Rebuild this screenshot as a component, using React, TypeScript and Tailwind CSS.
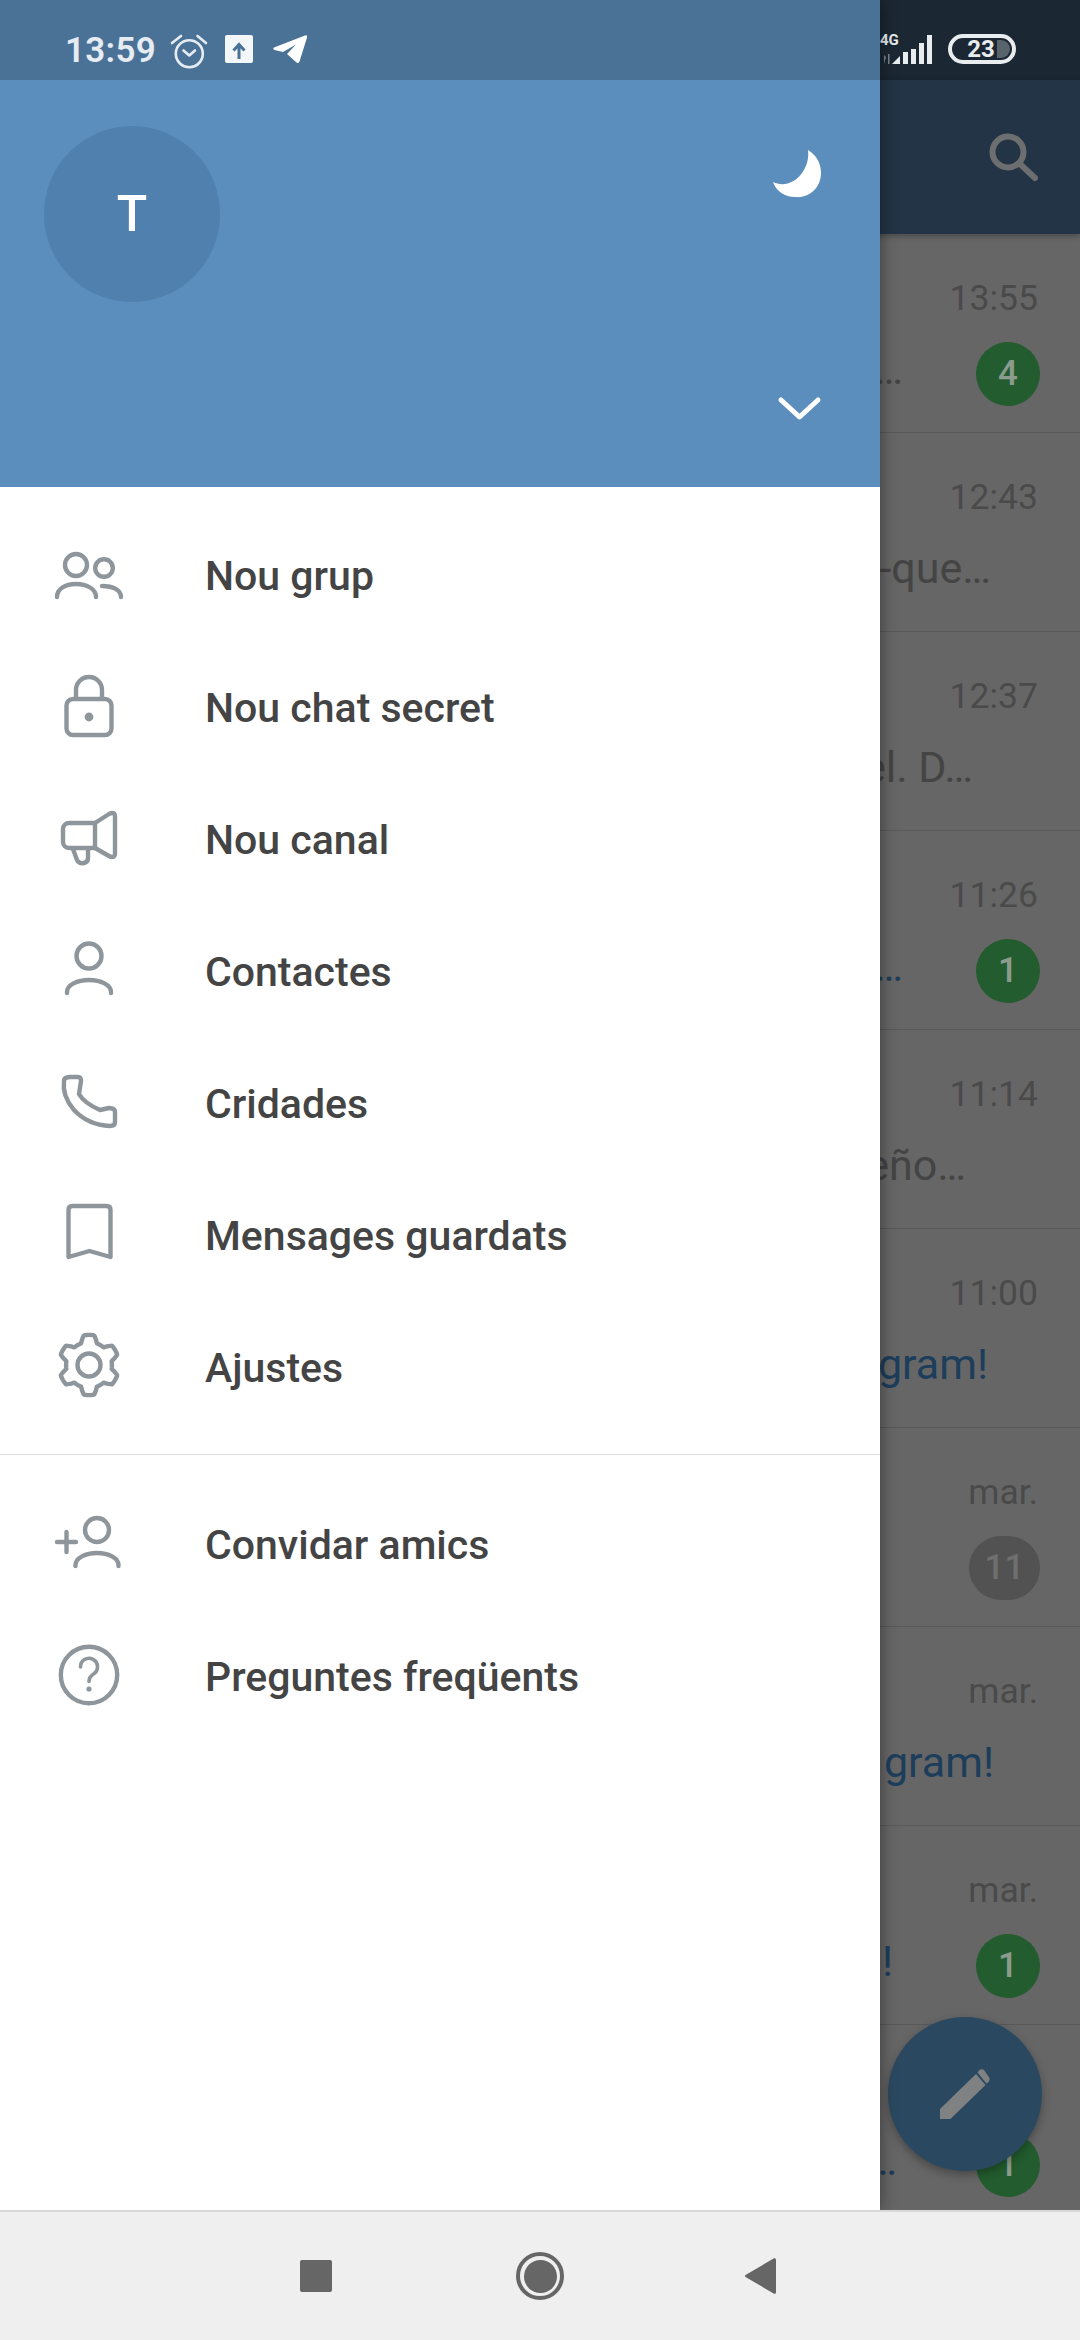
import React from "react";

const gearPath = (() => {
  const cx = 40, cy = 38, pts: string[] = [];
  for (let i = 0; i < 180; i++) {
    const t = (i / 180) * Math.PI * 2;
    const v = Math.max(-1, Math.min(1, Math.cos(6 * t) * 1.9));
    const r = 26.5 + 3.6 * v;
    pts.push(`${(cx + r * Math.sin(t)).toFixed(2)} ${(cy - r * Math.cos(t)).toFixed(2)}`);
  }
  return "M" + pts.join("L") + "Z";
})();

const Icon = ({ box, children }: { box: string; children: React.ReactNode }) => (
  <svg viewBox={box} className="w-[80px] h-[80px] shrink-0" fill="none" stroke="#8e969c" strokeWidth="4.4" strokeLinecap="round" strokeLinejoin="round">
    {children}
  </svg>
);

const menuA = [
  {
    label: "Nou grup",
    icon: (
      <Icon box="49 535 80 80">
        <circle cx="76" cy="565" r="11" />
        <circle cx="104" cy="568" r="8.8" />
        <path d="M57 597c0-8 8-13 19-13s20 5 20 13" />
        <path d="M102 586c11 0 19 4 19 11" />
      </Icon>
    ),
  },
  {
    label: "Nou chat secret",
    icon: (
      <Icon box="49 667 80 80">
        <rect x="66.5" y="699" width="45" height="36" rx="6.5" />
        <path d="M76 698v-8a13 13 0 0 1 26 0v8" />
        <circle cx="89" cy="717" r="4.4" fill="#8e969c" stroke="none" />
      </Icon>
    ),
  },
  {
    label: "Nou canal",
    icon: (
      <Icon box="49 800 80 80">
        <path d="M95 824H69a6 6 0 0 0-6 6v13a6 6 0 0 0 6 6h26z" />
        <path d="M95 824l14-9q6-3 6 3v36q0 6-6 3l-14-8" />
        <path d="M73 850l4 11q2 4 7 3q4-1 4-5v-9" />
      </Icon>
    ),
  },
  {
    label: "Contactes",
    icon: (
      <Icon box="49 933 80 80">
        <circle cx="89" cy="958" r="12.5" />
        <path d="M67 995v-1c0-7 10-12 22-12s22 5 22 12v1" />
      </Icon>
    ),
  },
  {
    label: "Cridades",
    icon: (
      <Icon box="49 1065 80 80">
        <path d="M70 1079h8q3 0 3 4l-2 13q5 9 21 16l9-2q6 0 6 4v10q0 4-5 4q-22-1-36-16q-12-14-10-29q0-4 6-4z" />
      </Icon>
    ),
  },
  {
    label: "Mensages guardats",
    icon: (
      <Icon box="49 1197 80 80">
        <path d="M68.5 1212q0-4 4-4h34q4 0 4 4v47l-21-6l-21 6z" />
      </Icon>
    ),
  },
  {
    label: "Ajustes",
    icon: (
      <Icon box="0 0 80 80">
        <path d={gearPath} />
        <circle cx="40" cy="38" r="11.5" />
      </Icon>
    ),
  },
];

const menuB = [
  {
    label: "Convidar amics",
    icon: (
      <Icon box="49 1505 80 80">
        <path d="M57 1543h19M66.5 1533v20" />
        <circle cx="97" cy="1531" r="12" />
        <path d="M75.5 1567v-1c0-7 10-12 21.5-12s21.5 5 21.5 12v1" />
      </Icon>
    ),
  },
  {
    label: "Preguntes freqüents",
    icon: (
      <Icon box="49 1637 80 80">
        <circle cx="89" cy="1676" r="28.2" />
        <path d="M80.5 1668a8.5 8.5 0 1 1 13 7c-3 2-4.5 4-4.5 7.5" strokeWidth="3.6" />
        <circle cx="89" cy="1690" r="2.6" fill="#8e969c" stroke="none" />
      </Icon>
    ),
  },
];

const MenuRow = ({ label, icon }: { label: string; icon: React.ReactNode }) => (
  <div className="flex items-center h-[132px] pl-[49px]">
    {icon}
    <span className="ml-[76px] mt-[3px] text-[41px] font-medium text-[#444444] leading-none whitespace-nowrap">{label}</span>
  </div>
);

const rows: { time: string; text?: string; blue?: boolean; mr?: string; badge?: string; grey?: boolean }[] = [
  { time: "13:55", text: "…", mr: "mr-[73px]", badge: "4" },
  { time: "12:43", text: "-que…", mr: "mr-[49px]" },
  { time: "12:37", text: "el. D…", mr: "mr-[67px]" },
  { time: "11:26", text: "…", blue: true, mr: "mr-[73px]", badge: "1" },
  { time: "11:14", text: "eño…", mr: "mr-[74px]" },
  { time: "11:00", text: "gram!", blue: true, mr: "mr-[52px]" },
  { time: "mar.", badge: "11", grey: true },
  { time: "mar.", text: "gram!", blue: true, mr: "mr-[46px]" },
  { time: "mar.", text: "!", blue: true, mr: "mr-[83px]", badge: "1" },
  { time: "mar.", text: "…", blue: true, mr: "mr-[79px]", badge: "1" },
];

export default function App() {
  return (
    <div className="relative w-[1080px] h-[2340px] overflow-hidden flex flex-col bg-[#666666] font-[Roboto,sans-serif]">
      {/* status bar, right part */}
      <div className="h-[80px] shrink-0 bg-[#1b2733] flex items-center justify-end pr-[64px] pt-[18px]">
        <div className="relative w-[62px] h-[31px] mr-[16px]">
          <span className="absolute left-[10px] -top-[2px] text-[15px] font-bold leading-[16px] text-[#e9edf0]">4G</span>
          <svg viewBox="870 33 62 31" className="w-[62px] h-[31px]" fill="#e9edf0">
            <path d="M884 63v-9l2 2zM888 53v10h1.5V53z" fill="#7b858e" />
            <path d="M892 63l8-8v8zM903 51h5v12H903zM911 48h5v15H911zM919 42h5v21H919zM927 34h5v29h-5z" />
          </svg>
        </div>
        <div className="relative flex items-center justify-center w-[68px] h-[30px] rounded-full border-[4px] border-[#e9edf0]">
          <span className="text-[24px] font-bold leading-none text-[#e9edf0] mr-[2px] z-10">23</span>
          <span className="absolute right-[2px] top-[2px] bottom-[2px] w-[13px] rounded-r-full bg-[#59636c]" />
        </div>
      </div>

      {/* app bar */}
      <div className="h-[154px] shrink-0 bg-[#223446] flex items-start justify-end pr-[42px] pt-[52px] shadow-[0_2px_6px_rgba(0,0,0,0.3)] z-10">
        <svg viewBox="988 132 50 50" className="w-[50px] h-[50px]" fill="none" stroke="#6c6e70" strokeWidth="6" strokeLinecap="round">
          <circle cx="1008" cy="152" r="15.5" />
          <path d="M1019 163l16 15" />
        </svg>
      </div>

      {/* chat list */}
      <div className="flex-1 min-h-0 overflow-hidden">
        {rows.map((r, i) => (
          <div key={i} className="h-[199px] border-b border-[#595959] flex flex-col items-end pt-[43px] pr-[40px]">
            <span className="text-[35.5px] leading-[42px] h-[42px] mr-[2px] text-[#4a4a4a] whitespace-nowrap">{r.time}</span>
            <div className="flex items-center justify-end h-[64px] mt-[23px]">
              {r.text && (
                <span className={`text-[43px] leading-none whitespace-nowrap -mt-[10px] ${r.mr} ${r.blue ? "text-[#1d3e5b]" : "text-[#444444]"}`}>{r.text}</span>
              )}
              {r.badge && (
                <span className={`h-[64px] rounded-full flex items-center justify-center text-[35px] font-medium ${r.grey ? "w-[71px] bg-[#525252] text-[#6f6f6f]" : "w-[64px] bg-[#235c2e] text-[#8b9c8e]"}`}>{r.badge}</span>
              )}
            </div>
          </div>
        ))}
      </div>

      {/* navigation bar */}
      <div className="h-[130px] shrink-0 bg-[#efefef] border-t-2 border-[#d9d9d9] flex items-center pl-[300px] z-30">
        <span className="w-[32px] h-[32px] rounded-[2px] bg-[#666666]" />
        <span className="ml-[184px] w-[48px] h-[48px] rounded-full border-[4px] border-[#666666] flex items-center justify-center">
          <span className="w-[33px] h-[33px] rounded-full bg-[#666666]" />
        </span>
        <svg viewBox="0 0 31 36" className="ml-[181px] w-[31px] h-[36px]" fill="#666666">
          <path d="M0.5 17L29 0.3q2-0.5 2 1.5v32.4q0 2-2 1.5L0.5 19q-1-1 0-2z" />
        </svg>
      </div>

      {/* compose button */}
      <div className="absolute left-[888px] top-[2017px] w-[154px] h-[154px] rounded-full bg-[#2a4960] shadow-[0_4px_10px_rgba(0,0,0,0.3)] flex items-center justify-center">
        <svg viewBox="941 2068 50 52" className="w-[50px] h-[52px] -mt-[1px]" fill="#7f8183">
          <path d="M941 2119v-10l36-35l9.500 11l-34.500 33.500q-1 0.500-2 0.500z" />
          <path d="M980 2070.500q2-2 5-0.500l5.500 8q0.500 2-1 4l-2 1.500l-9-11z" />
        </svg>
      </div>

      {/* drawer */}
      <div className="absolute left-0 top-0 bottom-[130px] w-[880px] bg-white flex flex-col shadow-[0_0_16px_rgba(0,0,0,0.45)] z-20">
        <div className="h-[80px] shrink-0 bg-[#4a7297] flex items-center pl-[65px] pt-[20px]">
          <span className="text-[35px] font-semibold leading-none text-[#e6ecf2] tracking-[0.3px] w-[105px]">13:59</span>
          <svg viewBox="170 33 38 36" className="w-[38px] h-[36px] mt-[3px]" fill="none" stroke="#e6ecf2" strokeWidth="2.6" strokeLinecap="round" strokeLinejoin="round">
            <circle cx="189.300" cy="52.700" r="13.500" />
            <path d="M172 42l9-7M197.500 35l8.500 7M183.500 49.500l5.800 5 5.700-5" />
          </svg>
          <svg viewBox="225 35 28 28" className="ml-[17px] w-[28px] h-[28px] mt-[-2px]">
            <rect x="225" y="35" width="28" height="28" rx="2" fill="#f4f7fa" />
            <path d="M239 59V45M233.500 50.500L239 44.500l5.500 6" fill="none" stroke="#4a7297" strokeWidth="3" />
          </svg>
          <svg viewBox="272 35 36 29" className="ml-[19px] w-[36px] h-[29px] mt-[-2px]" fill="#ffffff">
            <path d="M305 35.500q2.500-1 2 2l-7.500 24q-1 2.500-3 1L287 54l9-9.500-13 7.500-8.500-2q-2-1-0.500-2.500z" />
          </svg>
        </div>

        <div className="relative h-[407px] shrink-0 bg-[#5b8ebd] pl-[44px] pt-[46px]">
          <div className="w-[176px] h-[176px] rounded-full bg-[#5080ae] flex items-center justify-center text-[50px] font-medium text-white leading-none">T</div>
          <svg viewBox="770 148 54 52" className="absolute left-[770px] top-[68px] w-[54px] h-[52px]" fill="#ffffff">
            <path d="M808 150C820 157 824 172 819 183C814 194 804 198 795 197C785 197 776 191 773 182C783 187 795 183 802 173C807 166 809 158 808 150Z" />
          </svg>
          <svg viewBox="776 395 46 28" className="absolute left-[776px] top-[315px] w-[46px] h-[28px]" fill="none" stroke="#ffffff" strokeWidth="5" strokeLinecap="round" strokeLinejoin="round">
            <path d="M781 400l18.500 17L818 400" />
          </svg>
        </div>

        <div className="pt-[22px]">
          {menuA.map((m) => <MenuRow key={m.label} {...m} />)}
        </div>
        <div className="mt-[21px] h-px bg-[#dedede] shrink-0" />
        <div className="pt-[23px]">
          {menuB.map((m) => <MenuRow key={m.label} {...m} />)}
        </div>
      </div>
    </div>
  );
}
